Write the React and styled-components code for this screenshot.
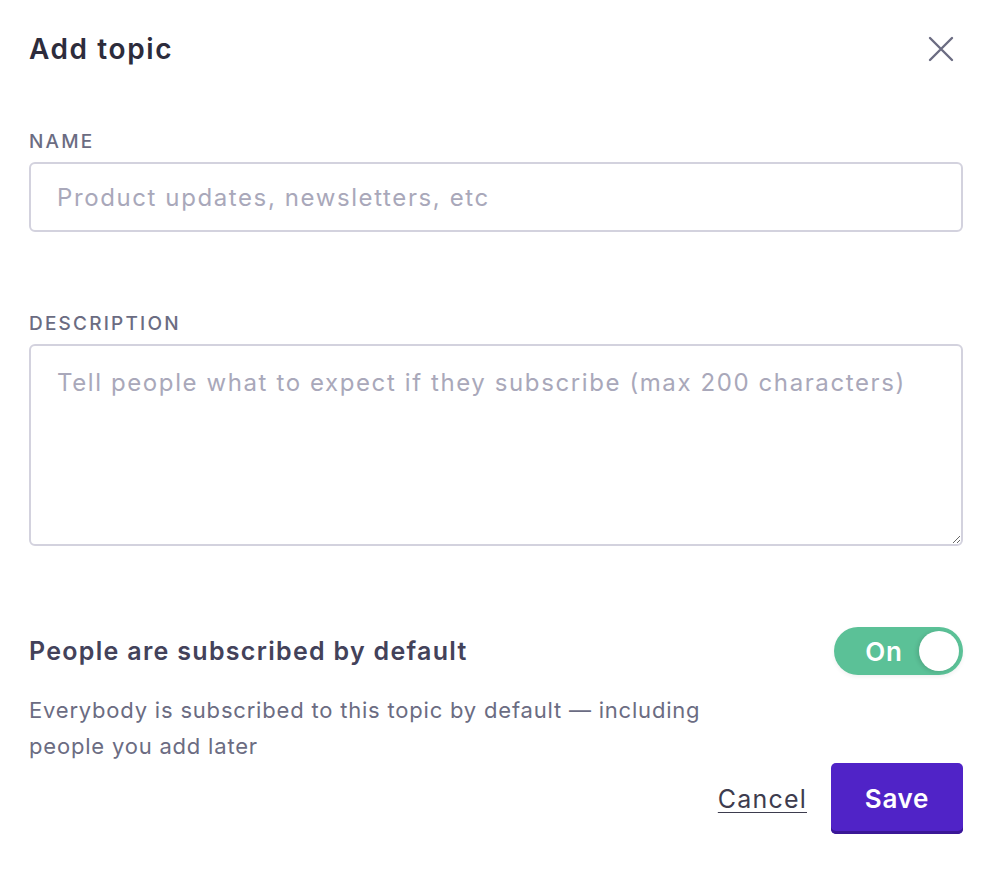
import React, { useState } from 'react';
import styled, { createGlobalStyle } from 'styled-components';

const GlobalStyle = createGlobalStyle`
  body {
    margin: 0;
    background: #fff;
    font-family: Inter, "Noto Sans", sans-serif;
  }
`;

const Modal = styled.div`
  padding: 28px 31px 40px 29px;
  display: flex;
  flex-direction: column;
`;

const Header = styled.div`
  display: flex;
  align-items: center;
  justify-content: space-between;
  height: 42px;
  margin-bottom: 61px;
`;

const Title = styled.h2`
  margin: 0;
  font-size: 28px;
  font-weight: 600;
  letter-spacing: 1.6px;
  color: #2d2c3c;
`;

const CloseButton = styled.button`
  border: none;
  background: none;
  padding: 0;
  margin-right: 8px;
  width: 28px;
  height: 28px;
  display: flex;
  align-items: center;
  justify-content: center;
  cursor: pointer;
`;

const Field = styled.div`
  display: flex;
  flex-direction: column;
  gap: 9px;
  margin-bottom: ${(p) => p.$gap}px;
`;

const Label = styled.label`
  font-size: 19px;
  line-height: 22px;
  font-weight: 500;
  letter-spacing: 2.2px;
  text-transform: uppercase;
  color: #6b6c82;
`;

const inputBase = `
  box-sizing: border-box;
  width: 100%;
  border: 2px solid #d3d2de;
  border-radius: 6px;
  padding: 0 26px;
  font-family: Inter, "Noto Sans", sans-serif;
  font-size: 24px;
  letter-spacing: 1.6px;
  color: #2d2c3c;
  outline: none;
  background: #fff;
  &::placeholder {
    color: #a9a8ba;
  }
`;

const TextInput = styled.input`
  ${inputBase}
  height: 70px;
`;

const TextArea = styled.textarea`
  ${inputBase}
  height: 202px;
  padding-top: 22px;
  line-height: 30px;
  resize: vertical;
  display: block;
`;

const ToggleRow = styled.div`
  display: flex;
  align-items: center;
  justify-content: space-between;
  height: 48px;
  margin-bottom: 17px;
`;

const ToggleTitle = styled.div`
  font-size: 25px;
  font-weight: 600;
  letter-spacing: 1.3px;
  color: #43425a;
`;

const Switch = styled.button`
  position: relative;
  box-sizing: border-box;
  width: 129px;
  height: 48px;
  border: none;
  border-radius: 24px;
  background: ${(p) => (p.$on ? '#5bc197' : '#c9c8d6')};
  color: #fff;
  font-family: Inter, "Noto Sans", sans-serif;
  font-size: 26px;
  font-weight: 600;
  letter-spacing: 0.8px;
  padding: 0 ${(p) => (p.$on ? '29px' : '0')} 0 ${(p) => (p.$on ? '0' : '56px')};
  cursor: pointer;
  box-shadow: 0 2px 4px rgba(0, 0, 0, 0.06);
`;

const Knob = styled.span`
  position: absolute;
  top: 4px;
  ${(p) => (p.$on ? 'right: 4px;' : 'left: 4px;')}
  width: 40px;
  height: 40px;
  border-radius: 50%;
  background: #fff;
  box-shadow: -2px 1px 4px rgba(0, 0, 0, 0.12);
`;

const Help = styled.p`
  margin: 0;
  max-width: 690px;
  font-size: 22px;
  line-height: 36px;
  letter-spacing: 0.8px;
  color: #6b6c82;
`;

const Actions = styled.div`
  display: flex;
  justify-content: flex-end;
  align-items: center;
  gap: 24px;
  margin-top: -1px;
`;

const CancelLink = styled.a`
  font-size: 25px;
  letter-spacing: 1.2px;
  color: #3d3c4e;
  text-decoration: underline;
  text-underline-offset: 4px;
  text-decoration-thickness: 1px;
  cursor: pointer;
`;

const SaveButton = styled.button`
  width: 132px;
  height: 71px;
  border: none;
  border-radius: 5px;
  background: #5023c7;
  box-shadow: inset 0 -3px 0 #3a1796;
  color: #fff;
  font-family: Inter, "Noto Sans", sans-serif;
  font-size: 26px;
  font-weight: 600;
  letter-spacing: 0.7px;
  cursor: pointer;
`;

export default function App() {
  const [on, setOn] = useState(true);

  return (
    <>
      <GlobalStyle />
      <Modal>
        <Header>
          <Title>Add topic</Title>
          <CloseButton aria-label="Close">
            <svg width="26" height="26" viewBox="0 0 26 26">
              <path d="M2 2 L24 24 M24 2 L2 24" stroke="#6b6c82" strokeWidth="2.4" strokeLinecap="round" />
            </svg>
          </CloseButton>
        </Header>

        <Field $gap={81}>
          <Label>Name</Label>
          <TextInput placeholder="Product updates, newsletters, etc" />
        </Field>

        <Field $gap={81}>
          <Label>Description</Label>
          <TextArea placeholder="Tell people what to expect if they subscribe (max 200 characters)" />
        </Field>

        <ToggleRow>
          <ToggleTitle>People are subscribed by default</ToggleTitle>
          <Switch $on={on} onClick={() => setOn(!on)}>
            {on ? 'On' : 'Off'}
            <Knob $on={on} />
          </Switch>
        </ToggleRow>

        <Help>
          Everybody is subscribed to this topic by default — including people you add later
        </Help>

        <Actions>
          <CancelLink>Cancel</CancelLink>
          <SaveButton>Save</SaveButton>
        </Actions>
      </Modal>
    </>
  );
}
